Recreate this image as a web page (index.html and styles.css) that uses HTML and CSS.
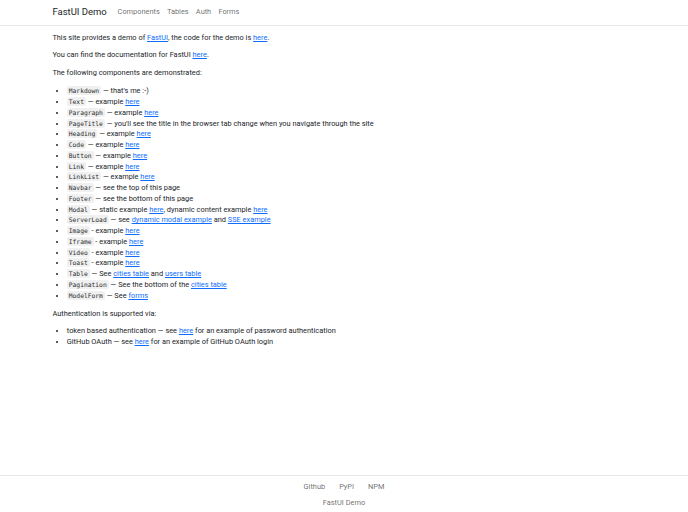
FILE: index.html
```html
<!DOCTYPE html>
<html lang="en">
<head>
    <meta charset="UTF-8">
    <meta name="viewport" content="width=device-width, initial-scale=1.0">
    <title>FastUI Demo</title>
    <link rel="stylesheet" href="styles.css">
</head>
<body>
    <nav class="navbar">
        <div class="container nav-inner">
            <a class="brand" href="#">FastUI Demo</a>
            <a class="nav-link" href="#">Components</a>
            <a class="nav-link" href="#">Tables</a>
            <a class="nav-link" href="#">Auth</a>
            <a class="nav-link" href="#">Forms</a>
        </div>
    </nav>

    <main class="container content">
        <p>This site provides a demo of <a href="#">FastUI</a>, the code for the demo is <a href="#">here</a>.</p>
        <p>You can find the documentation for FastUI <a href="#">here</a>.</p>
        <p>The following components are demonstrated:</p>
        <ul>
            <li><code>Markdown</code> — that's me :-)</li>
            <li><code>Text</code> — example <a href="#">here</a></li>
            <li><code>Paragraph</code> — example <a href="#">here</a></li>
            <li><code>PageTitle</code> — you'll see the title in the browser tab change when you navigate through the site</li>
            <li><code>Heading</code> — example <a href="#">here</a></li>
            <li><code>Code</code> — example <a href="#">here</a></li>
            <li><code>Button</code> — example <a href="#">here</a></li>
            <li><code>Link</code> — example <a href="#">here</a></li>
            <li><code>LinkList</code> — example <a href="#">here</a></li>
            <li><code>Navbar</code> — see the top of this page</li>
            <li><code>Footer</code> — see the bottom of this page</li>
            <li><code>Modal</code> — static example <a href="#">here</a>, dynamic content example <a href="#">here</a></li>
            <li><code>ServerLoad</code> — see <a href="#">dynamic modal example</a> and <a href="#">SSE example</a></li>
            <li><code>Image</code> - example <a href="#">here</a></li>
            <li><code>Iframe</code> - example <a href="#">here</a></li>
            <li><code>Video</code> - example <a href="#">here</a></li>
            <li><code>Toast</code> - example <a href="#">here</a></li>
            <li><code>Table</code> — See <a href="#">cities table</a> and <a href="#">users table</a></li>
            <li><code>Pagination</code> — See the bottom of the <a href="#">cities table</a></li>
            <li><code>ModelForm</code> — See <a href="#">forms</a></li>
        </ul>
        <p>Authentication is supported via:</p>
        <ul>
            <li>token based authentication — see <a href="#">here</a> for an example of password authentication</li>
            <li>GitHub OAuth — see <a href="#">here</a> for an example of GitHub OAuth login</li>
        </ul>
    </main>

    <footer class="footer">
        <div class="footer-links">
            <a href="#">Github</a>
            <a href="#">PyPI</a>
            <a href="#">NPM</a>
        </div>
        <div class="footer-text">FastUI Demo</div>
    </footer>
</body>
</html>
```

FILE: styles.css
```css
html, body {
    height: 100%;
}
body {
    margin: 0;
    font-family: Roboto, 'Liberation Sans', sans-serif;
    font-size: 7.4px;
    line-height: 10.75px;
    color: #212529;
    background-color: #fff;
    display: flex;
    flex-direction: column;
    min-height: 100vh;
}
a {
    color: #0d6efd;
}
.container {
    width: 594px;
    margin: 0 auto;
    padding: 0 5.4px;
    box-sizing: border-box;
}
.navbar {
    border-bottom: 1px solid #e6e6e6;
    height: 25px;
    display: flex;
    align-items: center;
}
.nav-inner {
    display: flex;
    align-items: center;
}
.brand {
    font-size: 9.5px;
    color: #212529;
    text-decoration: none;
    margin-right: 7.2px;
}
.nav-link {
    color: rgba(0, 0, 0, 0.6);
    text-decoration: none;
    padding: 0 3.6px;
}
.content {
    flex: 1;
    padding-top: 6.5px;
}
p {
    margin: 0 0 7.2px;
}
ul {
    margin: 0 0 7.2px;
    padding-left: 14.4px;
}
code {
    font-family: 'DejaVu Sans Mono', 'Liberation Mono', monospace;
    font-size: 6.3px;
    line-height: 0;
    color: #2b2b2b;
    background-color: #f0f0f0;
    padding: 1px 2px;
    border-radius: 2px;
}
.footer {
    border-top: 1px solid #e6e6e6;
    padding: 6px 0 3px;
    text-align: center;
    color: rgba(0, 0, 0, 0.6);
}
.footer-links {
    display: flex;
    justify-content: center;
    gap: 14px;
    margin-bottom: 5.5px;
}
.footer-links a {
    color: rgba(0, 0, 0, 0.6);
    text-decoration: none;
}
```
